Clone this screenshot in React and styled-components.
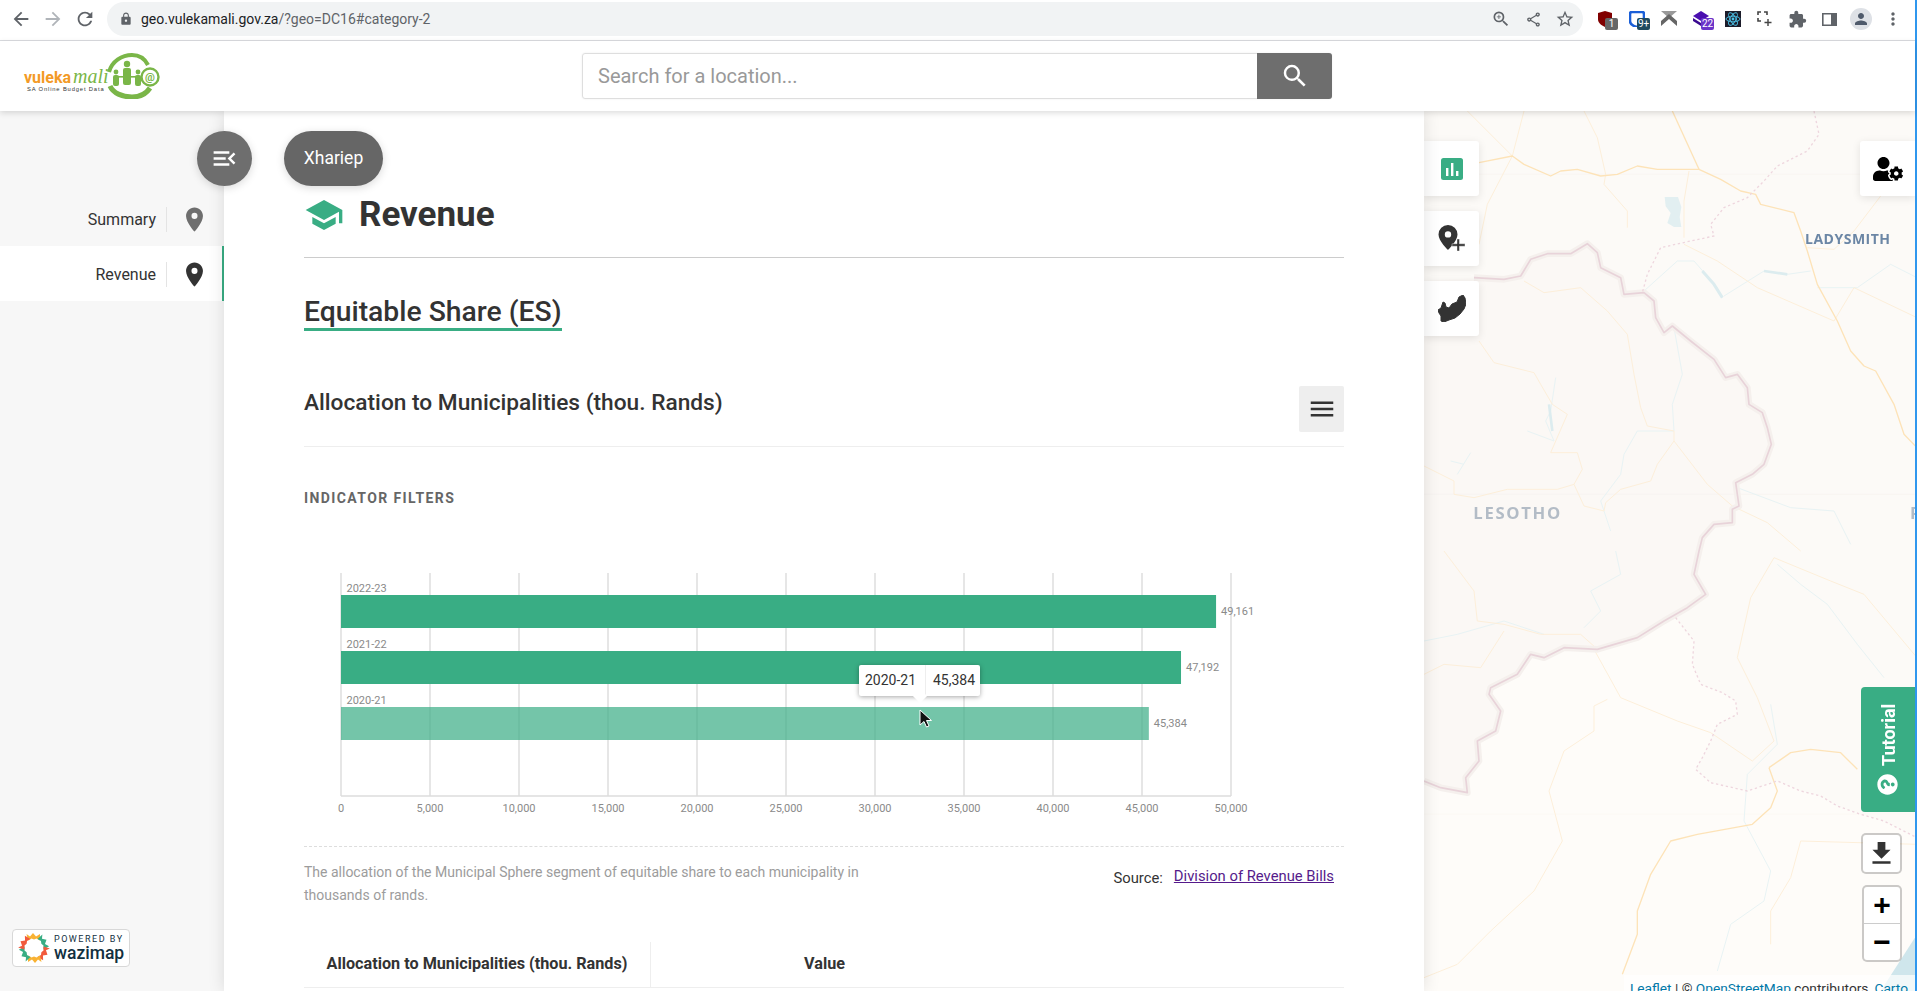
import React from 'react'
import styled, { createGlobalStyle } from 'styled-components'
import {
  MdArrowBack, MdArrowForward, MdRefresh, MdLock, MdZoomIn, MdOutlineShare, MdStarBorder,
  MdExtension, MdMoreVert, MdPerson, MdSearch, MdMenuOpen, MdPlace, MdSchool, MdMenu, MdFileDownload,
} from 'react-icons/md'
import { FaUserCog, FaQuestionCircle } from 'react-icons/fa'

const GREEN = '#39ad84'

const GlobalStyle = createGlobalStyle`
  html, body {
    margin: 0;
    height: 100%;
    overflow: hidden;
    font-family: Roboto, "Liberation Sans", sans-serif;
    color: #333;
  }
  * { box-sizing: border-box; }
`

const Page = styled.div`
  display: flex;
  height: 991px;
  background: #fff;
`
const Window = styled.div`
  flex: 1;
  min-width: 0;
  display: flex;
  flex-direction: column;
`
const ScrollStrip = styled.div`
  width: 2px;
  background: #2f97ee;
`

/* browser bar */
const BrowserBar = styled.div`
  height: 41px;
  flex: none;
  display: flex;
  align-items: center;
  padding: 0 0 2px 5px;
  background: #fff;
  border-bottom: 1px solid #dadce0;
  color: #5f6368;
`
const NavButton = styled.div`
  width: 32px;
  display: flex;
  justify-content: center;
  color: ${({ $dim }) => ($dim ? '#b0b4b9' : '#5f6368')};
`
const Omnibox = styled.div`
  width: 1476px;
  height: 34px;
  margin-left: 6px;
  display: flex;
  align-items: center;
  padding: 0 2px 0 12px;
  border-radius: 17px;
  background: #f1f3f4;
`
const Url = styled.div`
  flex: 1;
  margin-left: 8px;
  font-size: 14px;
  color: #5f6368;
  b { font-weight: 400; color: #202124; }
`
const OmniIcon = styled.div`
  width: 32px;
  display: flex;
  justify-content: center;
`
const Extensions = styled.div`
  display: flex;
  margin-left: 6px;
`
const Ext = styled.div`
  position: relative;
  width: 32px;
  height: 24px;
  display: flex;
  align-items: center;
  justify-content: center;
`
const ExtBadge = styled.span`
  position: absolute;
  left: 16px;
  top: 11px;
  min-width: 13px;
  height: 12px;
  padding: 0 1px;
  border-radius: 2px;
  background: ${({ $bg }) => $bg};
  color: #fff;
  font-size: 10px;
  line-height: 12px;
  text-align: center;
`
const Avatar = styled.div`
  width: 22px;
  height: 22px;
  border-radius: 50%;
  background: #dee1e6;
  color: #4f5a6b;
  display: flex;
  align-items: center;
  justify-content: center;
`

/* site header */
const Header = styled.header`
  height: 70px;
  flex: none;
  position: relative;
  z-index: 5;
  display: flex;
  align-items: center;
  background: #fff;
  box-shadow: 0 2px 6px rgba(0, 0, 0, .14);
`
const LogoWrap = styled.div`
  width: 582px;
  padding-left: 22px;
  flex: none;
  display: flex;
`
const SearchBox = styled.div`
  width: 750px;
  height: 46px;
  display: flex;
  border: 1px solid #dedede;
  border-radius: 3px;
  box-shadow: 0 0 2px rgba(0, 0, 0, .08);
`
const SearchText = styled.div`
  flex: 1;
  padding-left: 15px;
  font-size: 20px;
  line-height: 44px;
  color: #999;
`
const SearchButton = styled.div`
  width: 75px;
  margin: -1px -1px -1px 0;
  display: flex;
  align-items: center;
  justify-content: center;
  background: #6e6e6e;
  border-radius: 0 3px 3px 0;
  color: #fff;
`

/* body */
const Body = styled.div`
  flex: 1;
  min-height: 0;
  position: relative;
  display: flex;
`
const Sidebar = styled.aside`
  width: 224px;
  flex: none;
  position: relative;
  padding-top: 80px;
  background: #f7f7f7;
`
const NavRow = styled.div`
  height: 55px;
  display: flex;
  align-items: center;
  justify-content: flex-end;
  padding: 2px 16px 0 0;
  font-size: 16px;
  color: #333;
  background: ${({ $active }) => ($active ? '#fff' : 'transparent')};
  border-right: 2px solid ${({ $active }) => ($active ? GREEN : 'transparent')};
`
const NavLabel = styled.span`
  height: 25px;
  line-height: 25px;
  padding-right: 10px;
  margin-right: 16px;
  border-right: 1px solid #e4e4e4;
`
const NavPin = styled.div`
  display: flex;
  margin: 0 -3px;
  color: ${({ $active }) => ($active ? '#333' : '#6e6e6e')};
`
const RoundButton = styled.div`
  position: absolute;
  left: 197px;
  top: 20px;
  z-index: 3;
  width: 55px;
  height: 55px;
  border-radius: 50%;
  display: flex;
  align-items: center;
  justify-content: center;
  background: #6e6e6e;
  color: #fff;
  box-shadow: 0 2px 8px rgba(0, 0, 0, .15);
`
const GeoPill = styled.div`
  position: absolute;
  left: 284px;
  top: 20px;
  z-index: 3;
  width: 99px;
  height: 55px;
  border-radius: 28px;
  text-align: center;
  line-height: 55px;
  font-size: 17.5px;
  background: #666;
  color: #fff;
  box-shadow: 0 2px 8px rgba(0, 0, 0, .15);
`
const Badge = styled.div`
  position: absolute;
  left: 12px;
  bottom: 24px;
  width: 118px;
  height: 38px;
  display: flex;
  align-items: center;
  padding-left: 5px;
  gap: 4px;
  background: #fff;
  border: 1px solid #d8d8d8;
  border-radius: 4px;
`
const BadgeText = styled.div`
  color: #12303f;
  small {
    display: block;
    font-size: 9px;
    line-height: 10px;
    letter-spacing: 1.5px;
  }
  strong {
    display: block;
    font-size: 17.5px;
    line-height: 18px;
    font-weight: 500;
  }
`

/* content column */
const Content = styled.main`
  width: 1200px;
  flex: none;
  position: relative;
  z-index: 2;
  overflow: hidden;
  padding: 0 80px;
  background: #fff;
  box-shadow: 0 0 16px rgba(0, 0, 0, .12);
`
const SectionHead = styled.div`
  height: 147px;
  padding-top: 84px;
  border-bottom: 1px solid #ccc;
  display: flex;
  align-items: flex-start;
  gap: 15px;
  color: ${GREEN};
`
const SectionTitle = styled.h1`
  margin: 0;
  font-size: 35px;
  line-height: 40px;
  font-weight: 700;
  color: #333;
`
const SubTitle = styled.h2`
  display: block;
  width: fit-content;
  margin: 37px 0 0;
  font-size: 28.3px;
  line-height: 33px;
  font-weight: 500;
  color: #333;
  border-bottom: 3px solid ${GREEN};
`
const IndicatorHead = styled.div`
  height: 116px;
  padding-top: 37px;
  display: flex;
  justify-content: space-between;
  border-bottom: 1px solid #eee;
`
const IndicatorTitle = styled.h3`
  margin: 21px 0 0;
  font-size: 22.7px;
  line-height: 28px;
  font-weight: 500;
  color: #333;
`
const MenuButton = styled.div`
  width: 45px;
  height: 46px;
  margin-top: 18px;
  display: flex;
  align-items: center;
  justify-content: center;
  background: #eee;
  border-radius: 2px;
  color: #333;
`
const FiltersLabel = styled.div`
  margin-top: 42px;
  font-size: 14px;
  line-height: 18px;
  font-weight: 700;
  letter-spacing: 1.4px;
  color: #666;
`
const ChartWrap = styled.div`
  position: relative;
  height: 279px;
  margin-top: 61px;
  border-bottom: 1px dashed #ddd;
`
const ChartSvg = styled.svg`
  display: block;
  text {
    font-family: Roboto, "Liberation Sans", sans-serif;
    font-size: 11px;
    fill: #8a8a8a;
  }
`
const Tooltip = styled.div`
  position: absolute;
  left: 555px;
  top: 97px;
  width: 121px;
  height: 31px;
  display: flex;
  align-items: center;
  background: #fff;
  border-radius: 2px;
  font-size: 14px;
  color: #333;
  white-space: nowrap;
  box-shadow: 0 1px 5px rgba(0, 0, 0, .35);
  &::after {
    content: '';
    position: absolute;
    left: 56px;
    bottom: -5px;
    width: 10px;
    height: 10px;
    background: #fff;
    transform: rotate(45deg);
  }
`
const TipCell = styled.span`
  width: ${({ $w }) => $w};
  height: 100%;
  line-height: 31px;
  padding-left: 6px;
  & + & { border-left: 1px solid #eee; padding-left: 7px; }
`
const Cursor = styled.svg`
  position: absolute;
  left: 615px;
  top: 141px;
`
const InfoRow = styled.div`
  display: flex;
  justify-content: space-between;
  padding-top: 14px;
`
const Description = styled.p`
  width: 590px;
  margin: 0;
  font-size: 14px;
  line-height: 23px;
  color: #9c9c9c;
`
const SourceLine = styled.div`
  display: flex;
  align-items: flex-start;
  gap: 11px;
  padding: 7px 10px 0 0;
  font-size: 14.8px;
  line-height: 20px;
  color: #333;
  a {
    margin-top: -2px;
    color: #551a8b;
    text-decoration: underline;
  }
`
const TableHead = styled.div`
  margin-top: 35px;
  height: 46px;
  display: grid;
  grid-template-columns: 347px 347px;
  border-bottom: 1px solid #eee;
`
const TableHeadCell = styled.div`
  text-align: center;
  font-size: 16.2px;
  line-height: 44px;
  font-weight: 700;
  color: #333;
  border-right: ${({ $rule }) => ($rule ? '1px solid #eee' : 'none')};
`

/* map */
const MapPane = styled.section`
  flex: 1;
  min-width: 0;
  position: relative;
  overflow: hidden;
  background: #fefcf9;
`
const MapCanvas = styled.svg`
  position: absolute;
  left: 0;
  top: 0;
  filter: blur(.6px);
  text {
    font-family: "Open Sans", "Noto Sans", sans-serif;
    font-weight: 700;
  }
`
const ToolStack = styled.div`
  position: absolute;
  left: 0;
  top: 30px;
  display: flex;
  flex-direction: column;
  gap: 15px;
`
const ToolButton = styled.div`
  width: 55px;
  height: 55px;
  display: flex;
  align-items: center;
  justify-content: center;
  background: #fff;
  color: ${({ $dark }) => ($dark ? '#000' : '#333')};
  border-radius: ${({ $right }) => ($right ? '3px 0 0 3px' : '0 3px 3px 0')};
  box-shadow: 0 2px 8px rgba(0, 0, 0, .1);
`
const RightTool = styled.div`
  position: absolute;
  right: 0;
  top: 30px;
`
const TutorialTab = styled.div`
  position: absolute;
  right: 0;
  top: 576px;
  width: 54px;
  height: 125px;
  display: flex;
  align-items: center;
  gap: 8px;
  padding-top: 17px;
  writing-mode: vertical-rl;
  transform: rotate(180deg);
  background: ${GREEN};
  border-radius: 0 4px 4px 0;
  color: #fff;
  font-size: 18px;
  font-weight: 700;
  svg { transform: rotate(90deg); }
`
const MapControls = styled.div`
  position: absolute;
  right: 13px;
  top: 722px;
  display: flex;
  flex-direction: column;
  align-items: flex-end;
  gap: 11px;
`
const LeafletBar = styled.div`
  width: ${({ $wide }) => ($wide ? '41px' : '40px')};
  border: 2px solid rgba(0, 0, 0, .2);
  border-radius: 5px;
  background: #fff;
  background-clip: padding-box;
`
const LeafletButton = styled.div`
  height: ${({ $h }) => $h};
  display: flex;
  align-items: center;
  justify-content: center;
  color: #000;
  font-family: "Liberation Sans", sans-serif;
  font-size: 30px;
  font-weight: 700;
  line-height: 1;
  & + & { border-top: 1px solid #ccc; }
`
const Attribution = styled.div`
  position: absolute;
  right: 0;
  top: 864px;
  height: 30px;
  padding: 3px 7px 0 6px;
  background: rgba(255, 255, 255, .7);
  font-size: 13.7px;
  line-height: 20px;
  white-space: nowrap;
  color: #333;
  a { color: #0078a8; }
`

const years = [
  { label: '2022-23', value: 49161, top: 27 },
  { label: '2021-22', value: 47192, top: 83 },
  { label: '2020-21', value: 45384, top: 139, hover: true },
]
const ticks = [0, 5000, 10000, 15000, 20000, 25000, 30000, 35000, 40000, 45000, 50000]
const AXIS_X = 37
const PX = 890 / 50000

const Chart = () => (
  <ChartSvg width="1040" height="262">
    {ticks.map((t) => (
      <g key={t}>
        <line x1={AXIS_X + t * PX} x2={AXIS_X + t * PX} y1="5" y2="228" stroke="#dcdcdc" strokeWidth="1.4" />
        <text x={AXIS_X + t * PX} y="244" textAnchor="middle">{t.toLocaleString('en-US')}</text>
      </g>
    ))}
    <line x1={AXIS_X} x2={AXIS_X + 890} y1="228" y2="228" stroke="#dcdcdc" strokeWidth="1.4" />
    {years.map((y) => (
      <g key={y.label}>
        <text x={AXIS_X + 5.5} y={y.top - 3}>{y.label}</text>
        <rect x={AXIS_X} y={y.top} width={y.value * PX} height="33" fill={GREEN} opacity={y.hover ? 0.7 : 1} />
        <text x={AXIS_X + y.value * PX + 5} y={y.top + 20}>{y.value.toLocaleString('en-US')}</text>
      </g>
    ))}
  </ChartSvg>
)

const Logo = () => (
  <svg width="140" height="46" viewBox="0 0 140 46">
    <path d="M87 19C90 8 100 2 110 2c8 0 13 4 16 10" fill="none" stroke="#7ab648" strokeWidth="4" />
    <path d="M88 33c3 7 12 11 22 11 8 0 14-3 18-9" fill="none" stroke="#7ab648" strokeWidth="5" />
    <circle cx="128" cy="24" r="8.500" fill="#fff" stroke="#7ab648" strokeWidth="2.4" />
    <text x="128" y="28" textAnchor="middle" fontFamily="Roboto, sans-serif" fontSize="11" fontWeight="700" fill="#7ab648">@</text>
    <g fill="#7ab648">
      <circle cx="94" cy="19" r="2.4" /><rect x="91" y="22" width="6" height="11" rx="2" />
      <circle cx="105" cy="11" r="3.2" /><rect x="101" y="15" width="8" height="17" rx="2" />
      <circle cx="116" cy="19" r="2.4" /><rect x="113" y="22" width="6" height="11" rx="2" />
      <rect x="96" y="23" width="6" height="1.6" /><rect x="108" y="23" width="6" height="1.6" />
    </g>
    <text x="2" y="30" fontFamily="Roboto, sans-serif" fontSize="16" fontWeight="700" fill="#f39a26">vuleka</text>
    <text x="51" y="30" fontFamily="'Liberation Serif', serif" fontSize="20" fontStyle="italic" fill="#7ab648">mali</text>
    <text x="5" y="38" fontFamily="'Liberation Sans', sans-serif" fontSize="5.8" letterSpacing=".85" fill="#333">SA Online Budget Data</text>
  </svg>
)

const WazimapMark = () => {
  const colours = ['#f9b233', GREEN, '#f15a3c', '#f9b233', GREEN, '#f15a3c']
  return (
    <svg width="32" height="32" viewBox="-16 -16 32 32">
      {colours.map((c, i) => (
        <path
          key={i}
          transform={`rotate(${i * 60})`}
          d="M-6 -7.500 L-7.500 -14 L-4 -11.500 L-1 -15 L2 -11.500 L6 -14 L6 -7.500 L2.500 -9.500 L0 -8.500 L-2.500 -9.500 Z"
          fill={c}
        />
      ))}
    </svg>
  )
}

/* map lines in a 3x grid, same scale as the 493px wide pane */
const lesothoFill = 'M0 510L150 500 240 505 290 495 320 445 370 428 440 428 490 398 520 425 530 470 590 500 600 550 660 545 690 570 695 620 720 665 745 645 800 690 870 745 905 800 940 790 970 830 975 880 1015 905 1030 950 1042 1000 1020 1060 985 1090 935 1115 945 1185 925 1195 925 1235 870 1240 835 1280 825 1320 810 1390 845 1450 790 1490 720 1530 640 1580 520 1615 420 1610 360 1640 320 1630 280 1690 200 1730 195 1750 230 1800 215 1860 160 1890 165 1950 125 2000 130 2045 50 2030 0 2010Z'
const upperFill = 'M0 0H1479V2180L1380 2130 1310 2110 1240 2085 1190 2055 1130 2040 1060 2010 970 2040 860 2015 815 1975 860 1890 880 1840 940 1810 935 1770 895 1745 830 1720 805 1660 810 1590 755 1520 720 1530 640 1580 520 1615 420 1610 0 1600Z'
const border = lesothoFill.slice(7, -1)
const provinceLines = [
  'M1170 0L1185 70 1150 120 1060 165 1020 210 970 260 900 290 860 340 870 375 800 390 710 410 670 490 655 545',
  'M755 1520L810 1590 805 1660 830 1720 895 1745 935 1770 940 1810 880 1840 860 1890 835 1940 815 1975 860 2015 970 2040 1060 2010 1130 2040 1190 2055 1240 2085 1310 2110 1380 2130 1479 2180',
]
const mainRoads = [
  'M165 155L265 135 300 160 380 195 410 180 460 175 530 195 580 190 640 165 700 175 760 175 825 175 890 205 950 240 995 250 1010 280 1110 305 1130 360 1150 420 1180 520 1240 630 1280 720 1320 765 1355 780 1410 880 1440 970 1479 1010',
  'M745 0L825 175',
  'M1035 1970L1100 1925 1160 1915 1250 1925 1300 1975',
  'M1035 1970L1060 2040 1040 2090 985 2140 820 2170 740 2190 680 2290 640 2400 640 2470 595 2590',
]
const minorRoads = [
  'M300 510L360 545 470 530 550 600 610 670 630 790 650 890 670 945 750 960 750 990 700 1060 680 1110 590 1135 545 1175 540 1200 480 1185 450 1120 475 1075 460 1025 380 1025 430 910 385 880 350 820 330 785 210 755 165 690',
  'M0 1065L90 1110 90 1150 150 1160 250 1135 400 1135 450 1120',
  'M750 990L850 1120 925 1185 1030 1235 1130 1320',
  'M1370 255L1290 360 1230 415 1150 410',
  'M780 400L880 450 1000 530 1230 630 1290 530 1479 620',
  'M130 0L265 135 300 0M265 135L190 280 165 400',
  'M480 0L520 80 545 190 540 220 610 300 610 350',
  'M795 180L780 270 780 380',
  'M60 1320L150 1440 160 1530 240 1540 350 1570 470 1570 515 1610',
  'M0 1690L60 1660 170 1670 240 1560',
  'M510 1615L590 1760 760 1830 860 1865 985 1950 1050 1890 1000 1760 940 1640 980 1460 1050 1340 1220 1410 1320 1450 1479 1640',
  'M550 1765L510 1785 510 1860 420 1920 375 2040 415 2190 330 2340 200 2460 100 2560 0 2600',
  'M1479 2200L1130 2190 1100 2300 1040 2400 1040 2500',
]
const rivers = [
  'M835 480L870 520 895 560',
  'M660 540L760 450 810 450 880 530M900 555L1020 480 1090 490 1160 480M1180 530L1300 530 1400 460 1479 500',
  'M395 800L380 900 365 930 390 990 310 960',
  'M140 1025L100 1090M80 1050L120 1060',
  'M750 650L775 790 745 880 750 960 640 960 600 1030 590 1090 530 1170 560 1260',
  'M1060 1360L1130 1420 1210 1480 1300 1600 1380 1700',
  'M1040 1780L1060 1900 970 1990 960 2130 1040 2280 1020 2370 920 2440 880 2580',
  'M575 1320L590 1390 500 1440 530 1500 480 1550M0 1590L100 1570 240 1530 360 1570',
  'M940 1130L1100 1190 1230 1200 1280 1300',
]

const MapArt = () => (
  <MapCanvas width="491" height="880" viewBox="0 0 1473 2640">
    <path d={upperFill} fill="#fcfaf7" />
    <path d={lesothoFill} fill="#fbf8f5" />
    <line x1="0" x2="1479" y1="190" y2="190" stroke="#f7f4f0" strokeWidth="2" />
    <line x1="0" x2="1479" y1="1150" y2="1150" stroke="#f6f3ef" strokeWidth="2" />
    <line x1="0" x2="1479" y1="2110" y2="2110" stroke="#faf8f4" strokeWidth="2" />
    <g fill="none" strokeLinejoin="round">
      {rivers.map((d) => <path key={d} d={d} stroke="#e8f3f4" strokeWidth="3" />)}
      {minorRoads.map((d) => <path key={d} d={d} stroke="#fdefda" strokeWidth="3" />)}
      {mainRoads.map((d) => <path key={d} d={d} stroke="#fde3b8" strokeWidth="4" />)}
      <path d={`M${border}`} stroke="#f5f0ed" strokeWidth="20" />
      <path d={`M${border}`} stroke="#e8d3d9" strokeWidth="5" />
      {provinceLines.map((d) => <path key={d} d={d} stroke="#eed6de" strokeWidth="4" strokeDasharray="7 8" />)}
      <path d="M835 480L870 520 895 560" stroke="#dcecef" strokeWidth="9" />
      <path d="M1020 480L1090 490" stroke="#dcecef" strokeWidth="8" />
      <path d="M375 880L385 960" stroke="#dcecef" strokeWidth="8" />
    </g>
    <path d="M722 258h40l10 30-5 30 5 30-22 0-20-12 10-30-15-20z" fill="#e2eff1" />
    <path d="M1479 2470V2640H1370Z" fill="#cfe6ec" />
    <text x="1143" y="400" fontSize="42" letterSpacing="1.5" fill="#6b86a5">LADYSMITH</text>
    <text x="148" y="1224" fontSize="50" letterSpacing="5" fill="#b3bcc6">LESOTHO</text>
    <text x="1458" y="1224" fontSize="50" fill="#b3bcc6">P</text>
  </MapCanvas>
)

const App = () => (
  <Page>
    <GlobalStyle />
    <Window>
      <BrowserBar>
        <NavButton><MdArrowBack size={22} /></NavButton>
        <NavButton $dim><MdArrowForward size={22} /></NavButton>
        <NavButton><MdRefresh size={22} /></NavButton>
        <Omnibox>
          <MdLock size={14} />
          <Url><b>geo.vulekamali.gov.za</b>/?geo=DC16#category-2</Url>
          <OmniIcon><MdZoomIn size={20} /></OmniIcon>
          <OmniIcon><MdOutlineShare size={17} /></OmniIcon>
          <OmniIcon><MdStarBorder size={20} /></OmniIcon>
        </Omnibox>
        <Extensions>
          <Ext>
            <svg width="16" height="16" viewBox="0 0 16 16"><path d="M1 2l7-2 7 2v6c0 4-3 6-7 8-4-2-7-4-7-8z" fill="#800000" /></svg>
            <ExtBadge $bg="#666">1</ExtBadge>
          </Ext>
          <Ext>
            <svg width="16" height="16" viewBox="0 0 16 16"><path d="M3 1h10a2 2 0 012 2v7c0 3-3 5-7 6-4-1-7-3-7-6V3a2 2 0 012-2z" fill="none" stroke="#1a5fd8" strokeWidth="2.6" /></svg>
            <ExtBadge $bg="#1f4a5f">9+</ExtBadge>
          </Ext>
          <Ext>
            <svg width="16" height="16" viewBox="0 0 16 16"><path d="M0 0h16L8 7z" fill="#999" /><path d="M0 15l8-7 8 7v-5L8 3 0 10z" fill="#666" /></svg>
          </Ext>
          <Ext>
            <svg width="16" height="16" viewBox="0 0 16 16"><path d="M8 0l8 5-8 5-8-5z" fill="#4a0fb0" /><path d="M0 7l8 5 4-2v3l-4 2-8-5z" fill="#3a0a90" /></svg>
            <ExtBadge $bg="#6a35c9">22</ExtBadge>
          </Ext>
          <Ext>
            <svg width="16" height="16" viewBox="0 0 16 16">
              <rect width="16" height="16" fill="#1c1c2a" />
              <g fill="none" stroke="#4cc3e8" strokeWidth=".9">
                <ellipse cx="8" cy="8" rx="7" ry="2.8" />
                <ellipse cx="8" cy="8" rx="7" ry="2.8" transform="rotate(60 8 8)" />
                <ellipse cx="8" cy="8" rx="7" ry="2.8" transform="rotate(120 8 8)" />
              </g>
              <circle cx="8" cy="8" r="1.4" fill="#4cc3e8" />
            </svg>
          </Ext>
          <Ext>
            <svg width="16" height="16" viewBox="0 0 16 16" fill="none" stroke="#444" strokeWidth="1.4">
              <path d="M1 4V1h3M7 1h3v3M1 7v3h3" strokeWidth="1.6" />
              <path d="M11 8v7M7.5 11.5h7" />
            </svg>
          </Ext>
          <Ext><MdExtension size={19} /></Ext>
          <Ext>
            <svg width="15" height="13" viewBox="0 0 15 13"><path d="M0 0h15v13H0zM1.6 1.6v9.8h7.4V1.6z" fill="#5f6368" fillRule="evenodd" /></svg>
          </Ext>
          <Ext><Avatar><MdPerson size={18} /></Avatar></Ext>
          <Ext><MdMoreVert size={20} /></Ext>
        </Extensions>
      </BrowserBar>

      <Header>
        <LogoWrap><Logo /></LogoWrap>
        <SearchBox>
          <SearchText>Search for a location...</SearchText>
          <SearchButton><MdSearch size={30} /></SearchButton>
        </SearchBox>
      </Header>

      <Body>
        <Sidebar>
          <NavRow>
            <NavLabel>Summary</NavLabel>
            <NavPin><MdPlace size={29} /></NavPin>
          </NavRow>
          <NavRow $active>
            <NavLabel>Revenue</NavLabel>
            <NavPin $active><MdPlace size={29} /></NavPin>
          </NavRow>
          <Badge>
            <WazimapMark />
            <BadgeText>
              <small>POWERED BY</small>
              <strong>wazimap</strong>
            </BadgeText>
          </Badge>
        </Sidebar>
        <RoundButton><MdMenuOpen size={29} /></RoundButton>
        <GeoPill>Xhariep</GeoPill>

        <Content>
          <SectionHead>
            <MdSchool size={40} />
            <SectionTitle>Revenue</SectionTitle>
          </SectionHead>
          <SubTitle>Equitable Share (ES)</SubTitle>
          <IndicatorHead>
            <IndicatorTitle>Allocation to Municipalities (thou. Rands)</IndicatorTitle>
            <MenuButton><MdMenu size={30} /></MenuButton>
          </IndicatorHead>
          <FiltersLabel>INDICATOR FILTERS</FiltersLabel>
          <ChartWrap>
            <Chart />
            <Tooltip>
              <TipCell $w="66px">2020-21</TipCell>
              <TipCell $w="55px">45,384</TipCell>
            </Tooltip>
            <Cursor width="13" height="19" viewBox="0 0 13 19">
              <path d="M1 1v15l4-3.5 2.5 5.5 2.5-1-2.5-5.5h5z" fill="#111" stroke="#fff" strokeWidth="1" />
            </Cursor>
          </ChartWrap>
          <InfoRow>
            <Description>The allocation of the Municipal Sphere segment of equitable share to each municipality in thousands of rands.</Description>
            <SourceLine>
              <span>Source:</span>
              <a href="#bills">Division of Revenue Bills</a>
            </SourceLine>
          </InfoRow>
          <TableHead>
            <TableHeadCell $rule>Allocation to Municipalities (thou. Rands)</TableHeadCell>
            <TableHeadCell>Value</TableHeadCell>
          </TableHead>
        </Content>

        <MapPane>
          <MapArt />
          <ToolStack>
            <ToolButton>
              <svg width="22" height="22" viewBox="0 0 22 22">
                <rect width="22" height="22" rx="2.5" fill={GREEN} />
                <path d="M5 10h2.4v8H5zM10 5h2.4v13H10zM15 13h2.4v5H15z" fill="#fff" />
              </svg>
            </ToolButton>
            <ToolButton>
              <svg width="28" height="27" viewBox="0 0 28 27">
                <path d="M10 0a9.5 9.5 0 00-9.5 9.5C.5 16 10 25 10 25s9.5-9 9.5-15.5A9.5 9.5 0 0010 0zm0 12.6a3.2 3.2 0 110-6.4 3.2 3.2 0 010 6.4z" fill="#333" fillRule="evenodd" />
                <path d="M19 14h2.4v4.8H27v2.4h-5.6V26H19v-4.8h-5v-2.4h5z" fill="#333" stroke="#fff" strokeWidth=".4" />
              </svg>
            </ToolButton>
            <ToolButton>
              <svg width="28" height="27" viewBox="0 0 28 27">
                <path d="M0 15L3 13 5 7 7 8 8 12 11 13 14 9 19 7 21 2 25 0 27 3 28 9 26 14 22 19 17 23 11 25 6 27 3 26 3 21 1 18Z" fill="#333" strokeLinejoin="round" stroke="#333" strokeWidth="1" />
              </svg>
            </ToolButton>
          </ToolStack>
          <RightTool>
            <ToolButton $right $dark><FaUserCog size={30} /></ToolButton>
          </RightTool>
          <TutorialTab>
            <FaQuestionCircle size={21} />
            <span>Tutorial</span>
          </TutorialTab>
          <MapControls>
            <LeafletBar $wide>
              <LeafletButton $h="37px"><MdFileDownload size={31} color="#333" /></LeafletButton>
            </LeafletBar>
            <LeafletBar>
              <LeafletButton $h="36px">+</LeafletButton>
              <LeafletButton $h="37px">−</LeafletButton>
            </LeafletBar>
          </MapControls>
          <Attribution>
            <a href="#leaflet">Leaflet</a> | © <a href="#osm">OpenStreetMap</a> contributors, <a href="#carto">Carto</a>
          </Attribution>
        </MapPane>
      </Body>
    </Window>
    <ScrollStrip />
  </Page>
)

export default App
